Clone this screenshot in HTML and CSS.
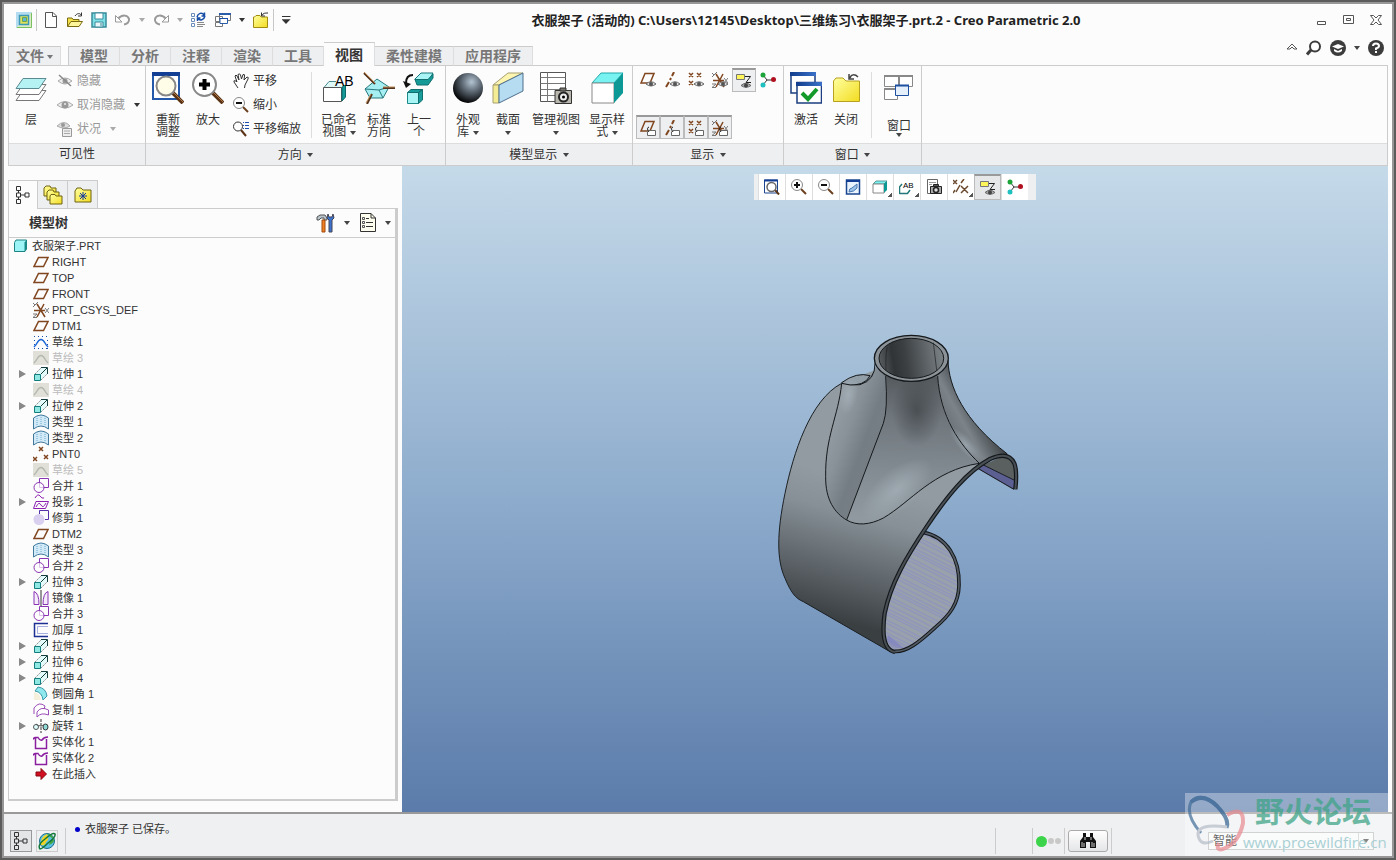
FILE: index.html
```html
<!DOCTYPE html>
<html lang="zh-CN">
  <head>
    <meta charset="utf-8" />
    <title>衣服架子 (活动的) - Creo Parametric 2.0</title>
    <meta name="viewport" content="width=device-width, initial-scale=1" />
    <link rel="stylesheet" href="styles.css" />
  </head>
  <body>
    <svg class="sprite" aria-hidden="true">
      <defs>
        <radialGradient id="ball" cx=".62" cy=".3" r=".7">
          <stop offset="0" stop-color="#b4c4d2" />
          <stop offset=".45" stop-color="#5f6b76" />
          <stop offset="1" stop-color="#050607" />
        </radialGradient>
        <linearGradient id="yellow" x1="0" y1="0" x2="1" y2="1">
          <stop offset="0" stop-color="#ffffa0" />
          <stop offset="1" stop-color="#f2dc20" />
        </linearGradient>
        <linearGradient id="blueTop" x1="0" y1="0" x2="1" y2="0">
          <stop offset="0" stop-color="#123c8c" />
          <stop offset="1" stop-color="#3a72c8" />
        </linearGradient>
      </defs>

      <!-- quick access -->
      <symbol id="app" viewBox="0 0 16 16"><path d="M0 0H16V16H0z" fill="#d8ecc8" /><path d="M0 0H16L0 16z" fill="#b4dcf0" /><path d="M3.500 3.500H12.500V12.500H3.500z" fill="#dce25c" stroke="#3c98b8" stroke-width="1.500" /><path d="M6.500 5.500H10.500V9.500H6.500z" fill="#5fb4d8" stroke="#6aa84a" /><path d="M15.500 1V15.500H1" fill="none" stroke="#7ac060" /></symbol>
      <symbol id="new" viewBox="0 0 16 16"><path d="M2.500.5H10L13.500 4V15.500H2.500z" fill="#fff" stroke="#555" /><path d="M9.500.5V4.500H13.500" fill="none" stroke="#555" /></symbol>
      <symbol id="open" viewBox="0 0 16 16"><path d="M.5 14V6H5L6 7.500H12V14z" fill="#f3e14a" stroke="#7a6a10" /><path d="M.5 14.500L4 9.500H15.500L12 14.500z" fill="#fff59a" stroke="#7a6a10" /><path d="M8 4C10 1 13 1 14 3M14.500.5V4H11" fill="none" stroke="#333" /></symbol>
      <symbol id="save" viewBox="0 0 16 16"><path d="M1 1H15V15H1z" fill="#7fe0e6" stroke="#3a8a9a" stroke-width="1.500" /><path d="M4 1H12V7H4z" fill="#fff" stroke="#3a8a9a" /><path d="M4 10H12V15H4z" fill="#e8f6f8" stroke="#3a8a9a" /><path d="M10 11V14" stroke="#3a8a9a" /></symbol>
      <symbol id="undo" viewBox="0 0 16 16"><path d="M3 7C7 2 13 3 14 7C14.500 10 12 12 9 12.500" fill="none" stroke="#999" stroke-width="2" /><path d="M.5 3.500V10H7z" fill="#fff" stroke="#999" /></symbol>
      <symbol id="redo" viewBox="0 0 16 16"><path d="M13 7C9 2 3 3 2 7C1.500 10 4 12 7 12.500" fill="none" stroke="#999" stroke-width="2" /><path d="M15.500 3.500V10H9z" fill="#fff" stroke="#999" /></symbol>
      <symbol id="regen" viewBox="0 0 16 16"><path d="M.5 1.500H3.500V4.500H.5zM.5 6.500H3.500V9.500H.5zM.5 11.500H3.500V14.500H.5z" fill="#fff" stroke="#6a8cb8" /><path d="M6 10.500H13M6 12.500H14M6 14.500H12" stroke="#888" /><path d="M6 5C7 1 11 0 13 3M14 4C13 8 9 9 7 6.500M13.500.5V4H10.500M6.500 9V6H9.500" fill="none" stroke="#174ea6" stroke-width="1.500" /></symbol>
      <symbol id="windows" viewBox="0 0 16 16"><path d="M4.500 1.500H15.500V8.500H4.500zM.5 4.500H7.500V9.500H.5zM.5 10.500H7.500V14.500H.5z" fill="#fff" stroke="#777" /><path d="M4 2H16" stroke="#2a5ca8" stroke-width="2" /><path d="M5 6.500H12.500V11.500H5z" fill="#fff" stroke="#2a5ca8" /><path d="M4.500 6.500H13" stroke="#174ea6" /></symbol>
      <symbol id="closefile" viewBox="0 0 16 16"><path d="M.5 15.500V5H1.500L3 3.500H7L8 5H14.500V15.500z" fill="url(#yellow)" stroke="#a08c10" /><path d="M9 3.500C10 1 12 1 15 1M8.500.5V4H12" fill="none" stroke="#333" /></symbol>

      <!-- ribbon, large -->
      <symbol id="layers" viewBox="0 0 32 32"><path d="M8 18.500H31L24 28.500H1z" fill="#fff" stroke="#777" /><path d="M8 12.500H31L24 22.500H1z" fill="#fff" stroke="#777" /><path d="M8 6.500H31L24 16.500H1z" fill="#b4f2f4" stroke="#5b8a90" /></symbol>
      <symbol id="refit" viewBox="0 0 32 32"><path d="M1 1H27V27H1z" fill="#fff" stroke="#2458a8" stroke-width="2" /><path d="M0 0H28V4H0z" fill="#123f94" /><path d="M20 20L31 31" stroke="#5b3416" stroke-width="4" /><path d="M21 20L31 30" stroke="#b07a48" stroke-width="1" /><circle cx="14" cy="14" r="9.500" fill="#fffde8" stroke="#888" stroke-width="2" /></symbol>
      <symbol id="zoomin" viewBox="0 0 32 32"><path d="M20 20L31 31" stroke="#5b3416" stroke-width="4" /><path d="M21 20L31 30" stroke="#b07a48" /><circle cx="12.500" cy="12.500" r="11.500" fill="#fff" stroke="#888" stroke-width="2" /><path d="M12.500 7V18M7 12.500H18" stroke="#000" stroke-width="4" /></symbol>
      <symbol id="named" viewBox="0 0 32 32"><path d="M1 15.500L6 9.500H23L19 15.500z" fill="#dff8f8" stroke="#4a8a90" /><path d="M.5 15.500H18.500V29.500H.5z" fill="#fff" stroke="#555" /><path d="M19 16L22.500 11V25L19 29z" fill="#159a98" stroke="#0b6b6a" /><path d="M13 0H32V13H13z" fill="#fcfcfc" /></symbol>
      <symbol id="stdview" viewBox="0 0 32 32"><path d="M2 17L14 7L26 15L20 26H7z" fill="#a5eef2" stroke="#27777c" /><path d="M2 17L16 18L26 15M16 18L20 26" fill="none" stroke="#27777c" /><path d="M1 1L12 12M20 16H32M9 22L4 32" stroke="#54341c" stroke-width="2" /><path d="M1 0L12 11M20 15H32M8 22L3 31" stroke="#c08c58" /></symbol>
      <symbol id="previous" viewBox="0 0 32 32"><path d="M4.500 20.500H15.500V31.500H4.500z" fill="#a9f4f4" stroke="#1d8a8a" /><path d="M4.500 20.500L8 17.500H19.500L15.500 20.500zM15.500 20.500L19.500 17.500V28L15.500 31.500z" fill="#189d9b" stroke="#126f70" /><path d="M12 7L18 1H30L26 8H12z" fill="#a9f4f4" stroke="#18777a" /><path d="M12 7.500H25L30 2V6L25 13H14z" fill="#159a98" stroke="#126f70" /><path d="M10 3C4 3 3 7 3 11" fill="none" stroke="#111" stroke-width="2" /><path d="M0 9L8 12L3 16z" fill="#111" /></symbol>
      <symbol id="sphere" viewBox="0 0 32 32"><circle cx="16" cy="16" r="15" fill="url(#ball)" /></symbol>
      <symbol id="section" viewBox="0 0 32 32"><path d="M1 13L16 1H31L7 13z" fill="#fbf5b0" stroke="#a8a070" /><path d="M1 13H7V31H1z" fill="#f4ec94" stroke="#a8a070" /><path d="M7 13L31 1V19L7 31z" fill="#b5dcf1" stroke="#4c6e8c" /></symbol>
      <symbol id="viewmgr" viewBox="0 0 32 32"><path d="M.5.5H25.500V29.500H.5z" fill="#fff" stroke="#555" /><path d="M.5 5.500H25.500M.5 11.500H25.500M.5 17.500H25.500M.5 23.500H25.500M7.500.5V29.500" stroke="#777" /><path d="M15 18.500H31.500V31.500H15z" fill="#b9b6ae" stroke="#333" /><path d="M20 16H26V19H20z" fill="#77746c" stroke="#333" /><circle cx="23.500" cy="25" r="4.500" fill="#eee" stroke="#222" stroke-width="2" /><circle cx="23.500" cy="25" r="1.500" /></symbol>
      <symbol id="style" viewBox="0 0 32 32"><path d="M1 11L10 1H32L23 11z" fill="#79f2f2" stroke="#2aa" /><path d="M1 11H23V31H1z" fill="#fff" stroke="#888" /><path d="M23 11L32 1V21L23 31z" fill="#0c9996" /></symbol>
      <symbol id="activate" viewBox="0 0 32 32"><path d="M1 1H25V21H1z" fill="#fff" stroke="#1d3e80" stroke-width="1.500" /><path d="M0 0H26V4H0z" fill="url(#blueTop)" /><path d="M7 10.500H31.500V31H7z" fill="#fff" stroke="#1d3e80" stroke-width="1.500" /><path d="M6 10H32V14H6z" fill="url(#blueTop)" /><path d="M12 21L18 27L27 17" fill="none" stroke="#149a2a" stroke-width="4" /></symbol>
      <symbol id="closewin" viewBox="0 0 32 32"><path d="M3.500 29.500V9L6 6H13L16 9H29.500V29.500z" fill="url(#yellow)" stroke="#b8a020" /><path d="M20 6C21 2 25 2 28 5M19 2V7H24" fill="none" stroke="#444" stroke-width="1.500" /></symbol>
      <symbol id="winlist" viewBox="0 0 32 32"><path d="M1.500 3.500H15.500V14.500H1.500zM16.500 3.500H29.500V14.500H16.500zM1.500 16.500H14.500V27.500H1.500z" fill="#fff" stroke="#888" /><path d="M1 4H30M1 17H14" stroke="#888" stroke-width="2" /><path d="M12.500 13.500H25.500V23.500H12.500z" fill="#e6f0fb" stroke="#1d4fa0" /><path d="M12 13.500H26" stroke="#1d4fa0" stroke-width="2" /></symbol>

      <!-- ribbon, small -->
      <symbol id="hide" viewBox="0 0 16 16"><path d="M1 8Q8 2 15 8Q8 14 1 8z" fill="#eee" stroke="#aaa" /><circle cx="8" cy="8" r="2.500" fill="#999" /><path d="M2 2L14 13" stroke="#888" stroke-width="1.500" /></symbol>
      <symbol id="eye" viewBox="0 0 16 16"><path d="M0 8Q8 1 16 8Q8 14 0 8z" fill="#eee" stroke="#aaa" /><circle cx="8" cy="8" r="3.500" fill="#999" /><circle cx="8" cy="7" r="1" fill="#eee" /></symbol>
      <symbol id="status" viewBox="0 0 16 16"><path d="M0 5Q7 -2 13 5Q7 9 0 5z" fill="#ddd" stroke="#aaa" /><circle cx="6" cy="4" r="2" fill="#999" /><path d="M5.500 7.500H14.500V15.500H5.500z" fill="#eee" stroke="#999" /><path d="M7 10H13M7 12.500H13" stroke="#aaa" /></symbol>
      <symbol id="hand" viewBox="0 0 16 16"><path d="M5 15L1 9Q0 7 3 8L4 9L2 3Q3 1 4 3L6 7L5 1.500Q7 0 7.500 2L8.500 6L10 1.500Q12 1 11.500 3L11 7L14 4Q16 4 15 6L12 12L11.500 15" fill="#fff" stroke="#333" /></symbol>
      <symbol id="zoomout" viewBox="0 0 16 16"><path d="M10 10L15 15" stroke="#6b4020" stroke-width="2" /><circle cx="6" cy="6" r="5.500" fill="#fff" stroke="#888" /><path d="M3 6H9" stroke="#111" stroke-width="2" /></symbol>
      <symbol id="zoomplus" viewBox="0 0 16 16"><path d="M10 10L15 15" stroke="#6b4020" stroke-width="2" /><circle cx="6" cy="6" r="5.500" fill="#fff" stroke="#888" /><path d="M3 6H9M6 3V9" stroke="#111" stroke-width="2" /></symbol>
      <symbol id="panzoom" viewBox="0 0 16 16"><path d="M8 9L13 15" stroke="#5b3416" stroke-width="2" /><circle cx="5" cy="5.500" r="4.500" fill="#fff" stroke="#333" /><path d="M10 1.500H11M12 1.500H16M10 4.500H11M12 4.500H16M10 7.500H11M12 7.500H16" stroke="#1b4fae" /></symbol>
      <symbol id="minieye" viewBox="0 0 16 16"><path d="M6 12Q11 7.500 16 12Q11 16 6 12z" fill="#ddd" stroke="#666" /><circle cx="11" cy="12" r="2" fill="#555" /></symbol>
      <symbol id="minitag" viewBox="0 0 16 16"><path d="M9 10.500H15.500V15.500H7.500V12z" fill="#fff" stroke="#666" /><path d="M9 12Q6 8 9 7" fill="none" stroke="#222" /></symbol>
      <symbol id="plane" viewBox="0 0 16 16"><path d="M5.500 3.500H15L10.500 12.500H1z" fill="none" stroke="#804620" stroke-width="1.500" /></symbol>
      <symbol id="splane" viewBox="0 0 16 16"><path d="M5 1.500H14L10 11H1z" fill="none" stroke="#804620" stroke-width="1.500" /></symbol>
      <symbol id="axis" viewBox="0 0 16 16"><path d="M10 0L8 4M7 6L6 8M5 10L2 15" stroke="#804620" stroke-width="2" /></symbol>
      <symbol id="points" viewBox="0 0 16 16"><path d="M1 1L5 5M5 1L1 5M9 1L13 5M13 1L9 5M1 9L5 13M5 9L1 13" stroke="#804620" stroke-width="1.500" /></symbol>
      <symbol id="csys" viewBox="0 0 16 16"><path d="M1 8.500H12M4 15L11 2M4 2L12 15" stroke="#804620" stroke-width="1.500" /><path d="M0 1L2 3M5 0L0 5M12 6L16 11M16 6L12 11M0 12H4L0 15.500H4" fill="none" stroke="#777" /></symbol>
      <symbol id="anno" viewBox="0 0 16 16"><path d="M.5 1.500H8.500V6.500H.5z" fill="#fff45a" stroke="#777" /><path d="M9 3.500H14.500L10 9.500H15" fill="none" stroke="#222" /><path d="M5 12.500Q10 8 15 12.500Q10 16 5 12.500z" fill="#aaa" stroke="#666" /><circle cx="10" cy="12.500" r="2" fill="#444" /></symbol>
      <symbol id="spin" viewBox="0 0 16 16"><path d="M3 3L7 8L3 13M7 8H13" fill="none" stroke="#333" /><circle cx="3" cy="3" r="2.500" fill="#1ca43a" /><circle cx="3" cy="13" r="2.500" fill="#1fc0c0" /><circle cx="13.500" cy="7.500" r="2.500" fill="#b01020" /></symbol>

      <!-- graphics toolbar -->
      <symbol id="refit16" viewBox="0 0 16 16"><path d="M.5 1H13.500V14H.5z" fill="#fff" stroke="#1b4690" /><path d="M0 1.500H14" stroke="#123f94" stroke-width="2" /><path d="M11 11L15 15.500" stroke="#5b3416" stroke-width="2" /><circle cx="7.500" cy="8" r="4.500" fill="#fff" stroke="#666" stroke-width="1.500" /></symbol>
      <symbol id="repaint" viewBox="0 0 16 16"><path d="M1.500 1H14.500V15H1.500z" fill="#eaf4ff" stroke="#1b4690" stroke-width="1.500" /><path d="M1 2H15" stroke="#123f94" stroke-width="2" /><path d="M4 13Q4 9 7 9L12 5V9Q9 13 4 13z" fill="#9cc4ea" stroke="#4a77b0" /></symbol>
      <symbol id="cube16" viewBox="0 0 16 16"><path d="M1 5L4 2H15L12 5z" fill="#79f2f2" stroke="#5a9a9a" /><path d="M1 5H12V14H1z" fill="#fff" stroke="#888" /><path d="M12 5L15 2V11L12 14z" fill="#0c9996" /></symbol>
      <symbol id="named16" viewBox="0 0 16 16"><path d="M.5 15V8L3 5M.5 14.500H8.500L11 11" fill="none" stroke="#22777a" stroke-width="1.500" /></symbol>
      <symbol id="viewmgr16" viewBox="0 0 16 16"><path d="M1.500.5H11.500V14.500H1.500z" fill="#fff" stroke="#666" /><path d="M3 3.500H10M3 5.500H6" stroke="#999" /><path d="M4.500 7.500H15.500V14.500H4.500z" fill="#aaa" stroke="#222" /><path d="M7.500 5.500H12.500V7.500H7.500z" fill="#555" stroke="#222" /><circle cx="10" cy="11" r="2.500" fill="#ddd" stroke="#222" stroke-width="1.500" /></symbol>
      <symbol id="datum16" viewBox="0 0 16 16"><path d="M0 1L4 5M4 1L0 5M11 0L8 4M7 6L3 13M8 7L15 14M15 7L8 14M0 14L2 11" stroke="#6b4a30" stroke-width="1.500" /></symbol>

      <!-- panel and tree -->
      <symbol id="treetab" viewBox="0 0 16 20"><path d="M1.500 1.500H5.500V5.500H1.500zM1.500 8H5.500V12H1.500zM1.500 14.500H5.500V18.500H1.500zM10 8H14V12H10zM3.500 5.500V8M3.500 12V14.500M5.500 10H10" fill="none" stroke="#333" /></symbol>
      <symbol id="folders" viewBox="0 0 20 20"><path d="M1 11V3L3 1H7L8 3H13V11z" fill="url(#yellow)" stroke="#6e6210" /><path d="M4 15V7L6 5H10L11 7H16V15z" fill="url(#yellow)" stroke="#6e6210" /><path d="M7 19V11L8 9.500H12L13 11H19V19z" fill="url(#yellow)" stroke="#6e6210" /></symbol>
      <symbol id="favorite" viewBox="0 0 20 20"><path d="M2 17V6L4 3H8L10 5H18V17z" fill="url(#yellow)" stroke="#6e6210" /><path d="M10 7V15M6 11H14M7 8L13 14M13 8L7 14" stroke="#123a9c" /></symbol>
      <symbol id="tools" viewBox="0 0 20 20"><path d="M1 7V4L4 2H9L11 5V7H8V5H5L3 7z" fill="#b8c4cc" stroke="#555" /><path d="M6 7H9V19H6z" fill="#f08020" stroke="#a04a10" /><path d="M12 1L11 5L13 7V19H16V7L18 5L17 1L16 4H13z" fill="#3a72d0" stroke="#445" /></symbol>
      <symbol id="settings" viewBox="0 0 18 20"><path d="M1.500.5H12L16.500 5V18.500H1.500z" fill="#fffff0" stroke="#333" /><path d="M12 .5V5H16.500M7 5.500H10M7 9.500H14M7 13.500H14" fill="none" stroke="#333" /><path d="M3.500 4.500H5.500V6.500H3.500zM3.500 8.500H5.500V10.500H3.500zM3.500 12.500H5.500V14.500H3.500z" fill="none" stroke="#555" /></symbol>
      <symbol id="part" viewBox="0 0 16 16"><path d="M1.500 4.500L3 2H13.500V11L12 13.500H1.500z" fill="#9cf4f6" stroke="#1c8284" /><path d="M11.500 4.500L13.500 2V11L11.500 13.500z" fill="#178a8a" /></symbol>
      <symbol id="arrow" viewBox="0 0 8 10"><path d="M0 1L7 5L0 9z" fill="#888" /></symbol>
      <symbol id="sketch" viewBox="0 0 16 16"><path d="M1 2.500H15M1 14.500H15M1.500 6V15M14.500 6V15" stroke="#1b4fae" stroke-dasharray="1 3" /><path d="M1 13Q3 11 4 9Q8 2 12 9Q13 11 15 13" fill="none" stroke="#1a66d6" stroke-width="1.500" /></symbol>
      <symbol id="sketchoff" viewBox="0 0 16 16"><path d="M0 1H16V15H0z" fill="#e0e0d8" /><path d="M1 13Q3 11 4 9Q8 2 12 9Q13 11 15 13" fill="none" stroke="#b4b8b0" stroke-width="1.500" /></symbol>
      <symbol id="extrude" viewBox="0 0 16 16"><path d="M1.500 9L9 1.500H14.500V7L7.500 14.500z" fill="#e4fbfb" /><path d="M1.500 8.500H7.500V14.500H1.500z" fill="#8fe8e2" stroke="#137c7c" /><path d="M2 8L8 2M8 14L14 8" stroke="#888" stroke-dasharray="2 1" /><path d="M8 1.500H14.500V8M8 8L14 2" fill="none" stroke="#163c3c" /></symbol>
      <symbol id="boundary" viewBox="0 0 16 16"><path d="M.5 4Q8 -2 15.500 4V15Q8 9 .5 15z" fill="#d2eaf8" stroke="#42789c" /><path d="M4 2V12M8 1V11M12 2V12" stroke="#6fa8cc" stroke-dasharray="1 1" /></symbol>
      <symbol id="pnt" viewBox="0 0 16 16"><path d="M6 1L10 5M10 1L6 5M0 11L4 15M4 11L0 15M11 9L15 13M15 9L11 13" stroke="#804620" stroke-width="1.500" /></symbol>
      <symbol id="merge" viewBox="0 0 16 16"><path d="M6.500.5H15.500V9.500H6.500z" fill="#fff" stroke="#8a35b4" /><circle cx="6" cy="9.500" r="5" fill="#fff" fill-opacity=".7" stroke="#8a35b4" /></symbol>
      <symbol id="project" viewBox="0 0 16 16"><path d="M2 4Q5 -1 7 2T11 4M3 7.500H15.500L12.500 14.500H.5zM3 13Q6 7 8 11T13 9" fill="none" stroke="#8a1fb0" /></symbol>
      <symbol id="trim" viewBox="0 0 16 16"><circle cx="6" cy="9.500" r="5.500" fill="#d8d0ee" /><path d="M6.500 4V.5H15.500V9.500H12" fill="none" stroke="#5530a8" /></symbol>
      <symbol id="mirror" viewBox="0 0 16 16"><path d="M8 0V16" stroke="#333" /><path d="M1 1.500Q6 3 6 14.500H1zM15 1.500Q10 3 10 14.500H15z" fill="#f4ecfa" stroke="#8a35b4" /></symbol>
      <symbol id="thicken" viewBox="0 0 16 16"><path d="M15 1.500H1.500V14.500H15" fill="none" stroke="#1c2f94" stroke-width="1.500" /><path d="M15 4.500H4.500V11.500H15" fill="none" stroke="#a9b0e0" /></symbol>
      <symbol id="round" viewBox="0 0 16 16"><path d="M2 5Q9 6 10 14L14 10Q13 2 5 1z" fill="#8fe8ee" stroke="#3c98a8" /><path d="M1 6Q7 7 8 14H1z" fill="#f4f0dc" /></symbol>
      <symbol id="copy" viewBox="0 0 16 16"><path d="M1 12V6Q6 -1 12 4L11 7M4 15V10Q8 4 15.500 8V13Q8 10 4 15z" fill="#fff" stroke="#9a4cb8" /></symbol>
      <symbol id="revolve" viewBox="0 0 16 16"><path d="M8 1V15" stroke="#333" stroke-dasharray="3 1" /><circle cx="3" cy="9" r="2.500" fill="#dff" stroke="#555" /><ellipse cx="12.500" cy="9" rx="2.500" ry="3" fill="#8fd8d8" stroke="#333" /><path d="M3 6Q8 10 12 6" fill="none" stroke="#555" /></symbol>
      <symbol id="solidify" viewBox="0 0 16 16"><path d="M0 5.500Q1 3 3 3.500H5Q7 7 9 6Q11 3 15 3M2.500 4V14.500H13.500V5" fill="none" stroke="#8a1fa0" stroke-width="1.500" /></symbol>
      <symbol id="insert" viewBox="0 0 16 16"><path d="M3 6H8V2.500L13.500 8L8 13.500V10H3z" fill="#d01020" stroke="#8a0810" /></symbol>

      <!-- status bar -->
      <symbol id="binoculars" viewBox="0 0 16 16"><path d="M3 0H6V4H10V0H13V4L16 8V15H10V9H6V15H0V8L3 4z" fill="#111" /><path d="M2 9V14M4 10V14M12 9V14M14 10V14M5 4V7M11 4V7" stroke="#ccc" /></symbol>
      <symbol id="globe" viewBox="0 0 20 20"><circle cx="10" cy="10" r="7.500" fill="#5cc0e4" stroke="#1b6f8c" /><path d="M4 14Q3 6 10 3Q13 8 9 11Q8 15 4 14z" fill="#f2d423" /><path d="M10 3Q16 3 16 8Q13 9 12 14Q17 12 17 9" fill="#44a844" /><path d="M3 18Q0 14 8 8Q16 1 18 3Q19 6 11 12Q5 18 3 18z" fill="none" stroke="#14783c" stroke-width="1.500" /></symbol>
    </svg>

    <div class="window">
      <header class="titlebar">
        <div class="quick">
          <svg class="icon app-logo"><use href="#app" /></svg>
          <span class="divider"></span>
          <button class="tool" aria-label="新建"><svg class="icon"><use href="#new" /></svg></button>
          <button class="tool" aria-label="打开"><svg class="icon"><use href="#open" /></svg></button>
          <button class="tool" aria-label="保存"><svg class="icon"><use href="#save" /></svg></button>
          <button class="tool" aria-label="撤消"><svg class="icon"><use href="#undo" /></svg></button>
          <button class="drop off" aria-label="撤消列表"></button>
          <button class="tool" aria-label="重做"><svg class="icon"><use href="#redo" /></svg></button>
          <button class="drop off" aria-label="重做列表"></button>
          <button class="tool" aria-label="重新生成"><svg class="icon"><use href="#regen" /></svg></button>
          <button class="tool" aria-label="窗口"><svg class="icon"><use href="#windows" /></svg></button>
          <button class="drop" aria-label="窗口列表"></button>
          <button class="tool" aria-label="关闭"><svg class="icon"><use href="#closefile" /></svg></button>
          <span class="divider"></span>
          <button class="drop customize" aria-label="自定义"></button>
        </div>
        <h1 class="title">衣服架子 (活动的) C:\Users\12145\Desktop\三维练习\衣服架子.prt.2 - Creo Parametric 2.0</h1>
        <div class="controls">
          <button aria-label="最小化"><svg width="12" height="12" viewBox="0 0 12 12"><path d="M1.500 7.500H9.500V10.500H1.500z" fill="#fff" stroke="#555" /></svg></button>
          <button aria-label="最大化"><svg width="12" height="12" viewBox="0 0 12 12"><path d="M.5 1.500H10.500V9.500H.5zM3.500 4.500H7.500V6.500H3.500z" fill="#fff" stroke="#555" /></svg></button>
          <button aria-label="关闭窗口"><svg width="12" height="12" viewBox="0 0 12 12"><path d="M.5 1.500H3.500L6 4L8.500 1.500H11.500L8 6L11.500 10.500H8.500L6 8L3.500 10.500H.5L4 6z" fill="#fff" stroke="#555" /></svg></button>
        </div>
      </header>

      <nav class="tabs">
        <button class="tab file">文件<i class="caret"></i></button>
        <div class="tab-group">
          <button class="tab">模型</button>
          <button class="tab">分析</button>
          <button class="tab">注释</button>
          <button class="tab">渲染</button>
          <button class="tab">工具</button>
          <button class="tab active">视图</button>
          <button class="tab">柔性建模</button>
          <button class="tab">应用程序</button>
        </div>
        <div class="help">
          <button aria-label="最小化功能区"><svg width="12" height="12" viewBox="0 0 12 12"><path d="M1 7L6 2L11 7H8L6 5L4 7z" fill="#fff" stroke="#555" /></svg></button>
          <button aria-label="搜索"><svg width="16" height="16" viewBox="0 0 16 16"><circle cx="9" cy="6.500" r="5" fill="#fff" stroke="#3c3c3c" stroke-width="2" /><path d="M5 10L1 14.500" stroke="#3c3c3c" stroke-width="3" /></svg></button>
          <button aria-label="学习"><svg width="16" height="16" viewBox="0 0 16 16"><circle cx="8" cy="8" r="8" fill="#3c3c3c" /><path d="M2 6.500L8 4L14 6.500L8 9zM4 9V11Q8 14 12 11V9L8 11z" fill="#fff" /></svg></button>
          <i class="caret"></i>
          <button aria-label="帮助"><svg width="16" height="16" viewBox="0 0 16 16"><circle cx="8" cy="8" r="8" fill="#3c3c3c" /><path d="M5 6Q5 3.500 8 3.500T11 6Q11 7.500 8 8.500V10" fill="none" stroke="#fff" stroke-width="2" /><path d="M7 11H9V13H7z" fill="#fff" /></svg></button>
        </div>
      </nav>

      <section class="ribbon">
        <div class="group visibility">
          <div class="group-body">
            <button class="big"><svg class="icon-lg"><use href="#layers" /></svg><span>层</span></button>
            <div class="rows off">
              <button><svg class="icon"><use href="#hide" /></svg>隐藏</button>
              <button><svg class="icon"><use href="#eye" /></svg>取消隐藏<i class="caret dark"></i></button>
              <button><svg class="icon"><use href="#status" /></svg>状况<i class="caret"></i></button>
            </div>
          </div>
          <div class="group-name">可见性</div>
        </div>
        <div class="group orientation">
          <div class="group-body">
            <button class="big"><svg class="icon-lg"><use href="#refit" /></svg><span>重新<br />调整</span></button>
            <button class="big"><svg class="icon-lg"><use href="#zoomin" /></svg><span>放大</span></button>
            <div class="rows">
              <button><svg class="icon"><use href="#hand" /></svg>平移</button>
              <button><svg class="icon"><use href="#zoomout" /></svg>缩小</button>
              <button><svg class="icon"><use href="#panzoom" /></svg>平移缩放</button>
            </div>
            <span class="split"></span>
            <button class="big"><svg class="icon-lg"><use href="#named" /><text x="12" y="14" class="ico-text">AB</text></svg><span>已命名<br />视图 <i class="caret"></i></span></button>
            <button class="big"><svg class="icon-lg"><use href="#stdview" /></svg><span>标准<br />方向</span></button>
            <button class="big"><svg class="icon-lg"><use href="#previous" /></svg><span>上一<br />个</span></button>
          </div>
          <button class="group-name">方向 <i class="caret"></i></button>
        </div>
        <div class="group display">
          <div class="group-body">
            <button class="big"><svg class="icon-lg"><use href="#sphere" /></svg><span>外观<br />库 <i class="caret"></i></span></button>
            <button class="big"><svg class="icon-lg"><use href="#section" /></svg><span>截面<br /><i class="caret"></i></span></button>
            <button class="big wide"><svg class="icon-lg"><use href="#viewmgr" /></svg><span>管理视图<br /><i class="caret"></i></span></button>
            <button class="big mid"><svg class="icon-lg"><use href="#style" /></svg><span>显示样<br />式 <i class="caret"></i></span></button>
          </div>
          <button class="group-name">模型显示 <i class="caret"></i></button>
        </div>
        <div class="group show">
          <div class="group-body toggles">
            <div class="toggle-row">
              <button class="toggle" aria-label="平面显示"><svg class="icon"><use href="#splane" /><use href="#minieye" /></svg></button>
              <button class="toggle" aria-label="轴显示"><svg class="icon"><use href="#axis" /><use href="#minieye" /></svg></button>
              <button class="toggle" aria-label="点显示"><svg class="icon"><use href="#points" /><use href="#minieye" /></svg></button>
              <button class="toggle" aria-label="坐标系显示"><svg class="icon"><use href="#csys" /><use href="#minieye" /></svg></button>
              <button class="toggle on" aria-label="注释显示"><svg class="icon"><use href="#anno" /></svg></button>
              <button class="toggle" aria-label="旋转中心"><svg class="icon"><use href="#spin" /></svg></button>
            </div>
            <div class="toggle-row">
              <button class="toggle on" aria-label="平面标记显示"><svg class="icon"><use href="#splane" /><use href="#minitag" /></svg></button>
              <button class="toggle on" aria-label="轴标记显示"><svg class="icon"><use href="#axis" /><use href="#minitag" /></svg></button>
              <button class="toggle on" aria-label="点标记显示"><svg class="icon"><use href="#points" /><use href="#minitag" /></svg></button>
              <button class="toggle on" aria-label="坐标系标记显示"><svg class="icon"><use href="#csys" /><use href="#minitag" /></svg></button>
            </div>
          </div>
          <button class="group-name">显示 <i class="caret"></i></button>
        </div>
        <div class="group windows">
          <div class="group-body">
            <button class="big"><svg class="icon-lg"><use href="#activate" /></svg><span>激活</span></button>
            <button class="big"><svg class="icon-lg"><use href="#closewin" /></svg><span>关闭</span></button>
            <span class="split"></span>
            <button class="big list"><svg class="icon-lg"><use href="#winlist" /></svg><span>窗口<br /><i class="caret"></i></span></button>
          </div>
          <button class="group-name">窗口 <i class="caret"></i></button>
        </div>
        <div class="group rest">
          <div class="group-body"></div>
          <div class="group-name"></div>
        </div>
      </section>

      <main class="workspace">
        <aside class="navigator">
          <div class="nav-tabs">
            <button class="nav-tab active" aria-label="模型树"><svg width="16" height="20"><use href="#treetab" /></svg></button>
            <button class="nav-tab" aria-label="文件夹浏览器"><svg width="20" height="20"><use href="#folders" /></svg></button>
            <button class="nav-tab" aria-label="收藏夹"><svg width="20" height="20"><use href="#favorite" /></svg></button>
          </div>
          <div class="nav-panel">
            <div class="nav-head">
              <h2>模型树</h2>
              <button aria-label="设置"><svg width="20" height="20"><use href="#tools" /></svg><i class="caret"></i></button>
              <button aria-label="显示"><svg width="18" height="20"><use href="#settings" /></svg><i class="caret"></i></button>
            </div>
            <ul class="tree">
              <li class="root"><svg class="icon"><use href="#part" /></svg>衣服架子.PRT</li>
              <li><svg class="icon"><use href="#plane" /></svg>RIGHT</li>
              <li><svg class="icon"><use href="#plane" /></svg>TOP</li>
              <li><svg class="icon"><use href="#plane" /></svg>FRONT</li>
              <li><svg class="icon"><use href="#csys" /></svg>PRT_CSYS_DEF</li>
              <li><svg class="icon"><use href="#plane" /></svg>DTM1</li>
              <li><svg class="icon"><use href="#sketch" /></svg>草绘 1</li>
              <li class="hidden-item"><svg class="icon"><use href="#sketchoff" /></svg>草绘 3</li>
              <li class="parent"><svg class="arrow"><use href="#arrow" /></svg><svg class="icon"><use href="#extrude" /></svg>拉伸 1</li>
              <li class="hidden-item"><svg class="icon"><use href="#sketchoff" /></svg>草绘 4</li>
              <li class="parent"><svg class="arrow"><use href="#arrow" /></svg><svg class="icon"><use href="#extrude" /></svg>拉伸 2</li>
              <li><svg class="icon"><use href="#boundary" /></svg>类型 1</li>
              <li><svg class="icon"><use href="#boundary" /></svg>类型 2</li>
              <li><svg class="icon"><use href="#pnt" /></svg>PNT0</li>
              <li class="hidden-item"><svg class="icon"><use href="#sketchoff" /></svg>草绘 5</li>
              <li><svg class="icon"><use href="#merge" /></svg>合并 1</li>
              <li class="parent"><svg class="arrow"><use href="#arrow" /></svg><svg class="icon"><use href="#project" /></svg>投影 1</li>
              <li><svg class="icon"><use href="#trim" /></svg>修剪 1</li>
              <li><svg class="icon"><use href="#plane" /></svg>DTM2</li>
              <li><svg class="icon"><use href="#boundary" /></svg>类型 3</li>
              <li><svg class="icon"><use href="#merge" /></svg>合并 2</li>
              <li class="parent"><svg class="arrow"><use href="#arrow" /></svg><svg class="icon"><use href="#extrude" /></svg>拉伸 3</li>
              <li><svg class="icon"><use href="#mirror" /></svg>镜像 1</li>
              <li><svg class="icon"><use href="#merge" /></svg>合并 3</li>
              <li><svg class="icon"><use href="#thicken" /></svg>加厚 1</li>
              <li class="parent"><svg class="arrow"><use href="#arrow" /></svg><svg class="icon"><use href="#extrude" /></svg>拉伸 5</li>
              <li class="parent"><svg class="arrow"><use href="#arrow" /></svg><svg class="icon"><use href="#extrude" /></svg>拉伸 6</li>
              <li class="parent"><svg class="arrow"><use href="#arrow" /></svg><svg class="icon"><use href="#extrude" /></svg>拉伸 4</li>
              <li><svg class="icon"><use href="#round" /></svg>倒圆角 1</li>
              <li><svg class="icon"><use href="#copy" /></svg>复制 1</li>
              <li class="parent"><svg class="arrow"><use href="#arrow" /></svg><svg class="icon"><use href="#revolve" /></svg>旋转 1</li>
              <li><svg class="icon"><use href="#solidify" /></svg>实体化 1</li>
              <li><svg class="icon"><use href="#solidify" /></svg>实体化 2</li>
              <li><svg class="icon"><use href="#insert" /></svg>在此插入</li>
            </ul>
          </div>
        </aside>

        <section class="canvas">
          <div class="view-tools">
            <button aria-label="重新调整"><svg class="icon"><use href="#refit16" /></svg></button>
            <button aria-label="放大"><svg class="icon"><use href="#zoomplus" /></svg></button>
            <button aria-label="缩小"><svg class="icon"><use href="#zoomout" /></svg></button>
            <button aria-label="重画"><svg class="icon"><use href="#repaint" /></svg></button>
            <button class="more" aria-label="显示样式"><svg class="icon"><use href="#cube16" /></svg></button>
            <button class="more" aria-label="已命名视图"><svg class="icon"><use href="#named16" /><text x="4" y="9" class="ico-text-sm">AB</text></svg></button>
            <button aria-label="视图管理器"><svg class="icon"><use href="#viewmgr16" /></svg></button>
            <button class="more" aria-label="基准显示"><svg class="icon"><use href="#datum16" /></svg></button>
            <button class="on" aria-label="注释显示"><svg class="icon"><use href="#anno" /></svg></button>
            <button aria-label="旋转中心"><svg class="icon"><use href="#spin" /></svg></button>
          </div>

          <svg class="model" viewBox="-15 0 840 1050" role="img" aria-label="衣服架子">
            <defs>
              <linearGradient id="body" gradientUnits="userSpaceOnUse" x1="300" y1="480" x2="190" y2="890">
                <stop offset="0" stop-color="#929ba1" />
                <stop offset=".25" stop-color="#869096" />
                <stop offset=".6" stop-color="#646b70" />
                <stop offset="1" stop-color="#3a3f42" />
              </linearGradient>
              <linearGradient id="neck" gradientUnits="userSpaceOnUse" x1="450" y1="160" x2="430" y2="600">
                <stop offset="0" stop-color="#52575b" />
                <stop offset=".3" stop-color="#6f767c" />
                <stop offset=".7" stop-color="#848d94" />
                <stop offset="1" stop-color="#8f999f" />
              </linearGradient>
              <linearGradient id="side" gradientUnits="userSpaceOnUse" x1="210" y1="300" x2="370" y2="360">
                <stop offset="0" stop-color="#949da4" />
                <stop offset=".35" stop-color="#899299" />
                <stop offset=".7" stop-color="#757d84" />
                <stop offset="1" stop-color="#777f85" />
              </linearGradient>
              <linearGradient id="hole" gradientUnits="userSpaceOnUse" x1="360" y1="120" x2="550" y2="90">
                <stop offset="0" stop-color="#55595c" />
                <stop offset=".2" stop-color="#303436" />
                <stop offset=".4" stop-color="#3c4043" />
                <stop offset="1" stop-color="#7d8488" />
              </linearGradient>
              <linearGradient id="flank" gradientUnits="userSpaceOnUse" x1="570" y1="310" x2="660" y2="260">
                <stop offset="0" stop-color="#6e757b" />
                <stop offset=".35" stop-color="#7c848a" />
                <stop offset="1" stop-color="#3e4346" />
              </linearGradient>
              <radialGradient id="glow">
                <stop offset="0" stop-color="#a9b4bc" stop-opacity=".7" />
                <stop offset="1" stop-color="#a9b4bc" stop-opacity="0" />
              </radialGradient>
              <radialGradient id="shade">
                <stop offset="0" stop-color="#3c4144" stop-opacity=".7" />
                <stop offset="1" stop-color="#3c4144" stop-opacity="0" />
              </radialGradient>
              <pattern id="ribs" width="40" height="66" patternUnits="userSpaceOnUse" patternTransform="rotate(27)">
                <path d="M0 0H40V66H0z" fill="#99a2aa" />
                <path d="M0 4H40M0 13H40M0 20H40M0 35H40M0 44H40M0 58H40" stroke="#8a8fc4" stroke-width="3" />
              </pattern>
            </defs>
            <!-- inner face of the sleeve -->
            <path d="M490 636C560 650 602 715 599 795C598 850 572 885 530 922C480 968 440 1000 405 998C372 996 364 950 370 900C382 820 430 720 490 636z" fill="url(#ribs)" />
            <path d="M380 960Q392 988 430 984L385 945z" fill="#7d7fc4" opacity=".6" />
            <path d="M490 637C560 650 599 715 597 795C596 850 570 885 526 922C476 968 440 996 405 994" fill="none" stroke="#15181b" stroke-width="11" />
            <path d="M490 637C560 650 599 715 597 795C596 850 570 885 526 922C476 968 440 996 405 994" fill="none" stroke="#545d66" stroke-width="5" />
            <!-- far tip -->
            <path d="M650 445L735 405Q772 415 770 500L758 508z" fill="#5a605f" />
            <path d="M652 444L664 432L766 482L762 508z" fill="#5b5f92" stroke="#1c1f28" stroke-width="3" />
            <!-- outer shell -->
            <path d="M245 190C150 240 100 400 75 520C50 640 50 720 75 775C92 815 105 835 130 845L385 992C362 970 364 920 375 870C400 770 450 690 500 610C560 520 610 470 660 432L742 402C610 300 566 200 564 120L345 150z" fill="url(#body)" />
            <path d="M245 190C150 240 100 400 75 520C50 640 50 720 75 775C92 815 105 835 130 845L385 992" fill="none" stroke="#1b2024" stroke-width="3" />
            <!-- shoulder hump -->
            <path d="M245 188Q290 155 330 167Q344 158 344 145L376 170L350 220Q290 210 245 188z" fill="#79828a" />
            <path d="M245 188Q290 155 330 167Q315 200 255 195z" fill="#929ea8" stroke="#15191c" stroke-width="3" />
            <!-- blended patches -->
            <path d="M245 190C235 290 195 350 197 470C196 540 225 580 260 600L370 310Q383 270 378 166L345 140Q346 180 300 194Q270 198 245 190z" fill="url(#side)" />
            <ellipse cx="265" cy="225" rx="28" ry="60" transform="rotate(10 265 225)" fill="url(#glow)" />
            <path d="M345 130Q346 180 300 194Q270 198 245 190C235 290 195 350 197 470C196 540 225 580 260 600" fill="none" stroke="#15191c" stroke-width="3" />
            <path d="M260 600C290 618 330 615 370 594C450 548 520 450 658 430C600 370 540 290 533 168Q450 200 378 168Q384 270 370 310z" fill="url(#neck)" />
            <ellipse cx="470" cy="270" rx="75" ry="110" fill="url(#shade)" />
            <ellipse cx="410" cy="510" rx="130" ry="60" transform="rotate(-40 410 510)" fill="url(#glow)" />
            <path d="M564 120C566 200 610 300 742 402Q700 402 658 430C595 365 540 280 533 165z" fill="url(#flank)" />
            <ellipse cx="618" cy="375" rx="70" ry="22" transform="rotate(48 618 375)" fill="url(#glow)" />
            <path d="M564 120C566 200 610 300 742 402M533 168C540 290 600 375 658 430C520 450 450 548 370 594C330 615 290 618 260 600L370 310Q384 270 377 168" fill="none" stroke="#15191c" stroke-width="3" />
            <!-- thick cut edge -->
            <path d="M405 996C370 990 366 940 374 880C392 790 440 710 500 620C560 530 620 455 690 417Q745 392 763 430Q772 455 766 508" fill="none" stroke="#14181b" stroke-width="13" />
            <path d="M405 996C370 990 366 940 374 880C392 790 440 710 500 620C560 530 620 455 690 417Q745 392 763 430Q772 455 766 508" fill="none" stroke="#474e54" stroke-width="6" />
            <!-- collar -->
            <ellipse cx="454" cy="115" rx="111" ry="69" fill="#8b9398" stroke="#15191c" stroke-width="4" />
            <ellipse cx="454" cy="115" rx="97" ry="60" fill="url(#hole)" stroke="#15191c" stroke-width="3" />
            <path d="M382 82Q376 100 378 150M520 68L530 150" fill="none" stroke="#1c2022" stroke-width="2" />
          </svg>
        </section>
      </main>

      <footer class="status">
        <button class="status-btn pressed" aria-label="切换导航器"><svg width="16" height="20"><use href="#treetab" /></svg></button>
        <button class="status-btn" aria-label="切换浏览器"><svg width="20" height="20"><use href="#globe" /></svg></button>
        <span class="bar"></span>
        <p class="message"><i class="bullet"></i>衣服架子 已保存。</p>
        <span class="bar"></span>
        <span class="bar lights-start"></span>
        <span class="lights"><i></i><i></i><i></i></span>
        <span class="bar"></span>
        <button class="find" aria-label="查找"><svg class="icon"><use href="#binoculars" /></svg></button>
        <span class="bar"></span>
        <label class="filter" aria-label="选择过滤器">
          <select>
            <option>智能</option>
          </select>
          <i class="caret"></i>
        </label>
      </footer>

      <div class="watermark">
        <svg class="watermark-logo" viewBox="0 0 60 60">
          <path d="M14 40Q-2 22 4 9Q12 -1 27 10Q43 24 40 35" fill="none" stroke="#3f6c98" stroke-width="3" />
          <path d="M4 9Q16 -1 30 13Q42 26 40 33" fill="none" stroke="#2f5f8f" stroke-width="4" />
          <path d="M40 34Q10 30 11 42Q13 54 26 48" fill="none" stroke="#b4bcc8" stroke-width="3" />
          <path d="M40 22Q57 12 56 30Q52 50 36 56Q28 58 32 50" fill="none" stroke="#e88a90" stroke-width="4" />
        </svg>
        <div class="watermark-text">
          <strong>野火论坛</strong>
          <span>www.proewildfire.cn</span>
        </div>
      </div>
    </div>
  </body>
</html>
```
FILE: styles.css
```css
* {
  box-sizing: border-box;
}
body {
  margin: 0;
  font: 12px/16px "Liberation Sans", "Noto Sans CJK SC", sans-serif;
  color: #333;
  background: #fcfcfc;
}
button {
  margin: 0;
  padding: 0;
  border: 0;
  background: none;
  font: inherit;
  color: inherit;
}
svg {
  display: block;
  flex: none;
}
.sprite {
  position: absolute;
  width: 0;
  height: 0;
}
.icon {
  width: 16px;
  height: 16px;
}
.icon-lg {
  width: 32px;
  height: 32px;
}
.ico-text {
  font: 14px "Liberation Sans", sans-serif;
}
.ico-text-sm {
  font: 8px "Liberation Sans", sans-serif;
}
.caret {
  display: inline-block;
  flex: none;
  width: 0;
  height: 0;
  border: 3px solid transparent;
  border-top: 4px solid #444;
  border-bottom: 0;
  vertical-align: middle;
}

.window {
  position: relative;
  display: flex;
  flex-direction: column;
  height: 100vh;
  border: 4px solid #979797;
  box-shadow: inset 0 0 0 1px #fff;
  outline: 2px solid #5c5c5c;
  outline-offset: -2px;
}

/* title bar */
.titlebar {
  display: flex;
  align-items: center;
  height: 32px;
  padding: 0 10px 0 12px;
}
.quick {
  display: flex;
  align-items: center;
}
.app-logo {
  margin-right: 4px;
}
.divider {
  width: 1px;
  height: 22px;
  margin-right: 2px;
  background: #c8c8c8;
}
.tool {
  display: grid;
  place-items: center;
  width: 24px;
  height: 24px;
}
.drop {
  display: grid;
  place-items: center;
  width: 14px;
  height: 24px;
}
.drop::after {
  content: "";
  border: 3px solid transparent;
  border-top: 4px solid #333;
  border-bottom: 0;
}
.drop.off::after {
  border-top-color: #aaa;
}
.drop.customize {
  width: 20px;
}
.drop.customize::after {
  width: 9px;
  height: 8px;
  border: 0;
  background: #333;
  clip-path: polygon(0 0, 100% 0, 100% 13%, 0 13%, 0 40%, 100% 40%, 50% 100%, 0 40%);
}
.title {
  flex: 1;
  margin: 0;
  font: bold 13px/20px "Noto Sans", "Noto Sans CJK SC", sans-serif;
  text-align: center;
  color: #222;
}
.controls {
  display: flex;
  gap: 15px;
}

/* ribbon tabs */
.tabs {
  display: flex;
  align-items: flex-end;
  height: 30px;
  padding: 0 4px;
  margin-bottom: -1px;
  z-index: 1;
}
.tab-group {
  display: flex;
  align-items: flex-end;
  margin-left: 7px;
}
.tab {
  height: 20px;
  padding: 0 11px;
  border: 1px solid #ccc;
  border-left: 0;
  border-right-color: #ddd;
  background: #eeeff1;
  font-size: 14px;
  font-weight: bold;
  line-height: 18px;
  color: #777;
}
.tab:first-child {
  border-left: 1px solid #ccc;
}
.tab.file {
  padding: 0 7px;
}
.tab.file .caret {
  margin-left: 3px;
  border-top-color: #777;
}
.tab.active {
  height: 24px;
  border-bottom: 0;
  background: #fcfcfc;
  color: #333;
}
.help {
  display: flex;
  align-items: center;
  align-self: flex-start;
  gap: 8px;
  height: 24px;
  margin-left: auto;
  padding-right: 4px;
}

/* ribbon */
.ribbon {
  display: flex;
  height: 101px;
  margin: 0 4px;
  border: 1px solid #ccc;
}
.group {
  display: flex;
  flex-direction: column;
  border-right: 1px solid #ccc;
}
.group-body {
  display: flex;
  flex: 1;
  padding: 6px 2px 0;
}
.group-name {
  height: 22px;
  border-top: 1px solid #ddd;
  background: #eeeff1;
  line-height: 20px;
  text-align: center;
}
.group-name .caret {
  margin-left: 2px;
}
.visibility {
  width: 137px;
}
.orientation {
  width: 300px;
}
.display {
  width: 187px;
}
.show {
  width: 151px;
}
.windows {
  width: 138px;
}
.rest {
  flex: 1;
  border-right: 0;
}
.big {
  display: flex;
  flex-direction: column;
  align-items: center;
  gap: 10px;
  width: 40px;
  line-height: 12px;
  white-space: nowrap;
}
.big.wide {
  width: 56px;
}
.big.mid {
  width: 46px;
}
.big.list {
  gap: 18px;
}
.big.list span {
  line-height: 8px;
}
.rows {
  display: flex;
  flex-direction: column;
  gap: 8px;
  padding: 1px 5px;
}
.visibility .rows {
  padding: 1px 0;
  margin-left: 6px;
}
.rows button {
  display: flex;
  align-items: center;
  gap: 4px;
  height: 16px;
}
.rows.off {
  color: #999;
}
.rows .caret {
  margin-left: 5px;
  border-top-color: #aaa;
}
.rows .caret.dark {
  border-top-color: #333;
}
.split {
  width: 1px;
  height: 66px;
  margin: 0 7px 0 5px;
  background: #ddd;
}
.group-body.toggles {
  flex-direction: column;
  justify-content: space-between;
  padding: 2px 3px 4px;
}
.toggle-row {
  display: flex;
}
.toggle {
  display: grid;
  place-items: center;
  width: 24px;
  height: 24px;
}
.toggle.on {
  border: 1px solid #bbb;
  border-top: 2px solid #999;
  background: #eeeff1;
}

/* navigator */
.workspace {
  display: flex;
  flex: 1;
  min-height: 0;
  margin-right: 4px;
}
.navigator {
  display: flex;
  flex-direction: column;
  width: 398px;
  padding: 14px 4px 11px;
}
.nav-tabs {
  display: flex;
  margin-bottom: -1px;
  z-index: 1;
}
.nav-tab {
  display: grid;
  place-items: center;
  width: 30px;
  height: 29px;
  border: 1px solid #ccc;
  border-left: 0;
  background: #eeeff1;
}
.nav-tab.active {
  border-left: 1px solid #ccc;
  border-bottom: 0;
  background: #fcfcfc;
}
.nav-panel {
  flex: 1;
  min-height: 0;
  border: 1px solid #ccc;
  border-right: 3px solid #ccc;
  border-bottom-width: 2px;
}
.nav-head {
  display: flex;
  align-items: center;
  gap: 9px;
  height: 29px;
  padding: 0 4px 0 20px;
  border-bottom: 1px solid #ccc;
}
.nav-head h2 {
  flex: 1;
  margin: 0;
  font-size: 13px;
}
.nav-head button {
  display: flex;
  align-items: center;
  gap: 8px;
}
.tree {
  margin: 0;
  padding: 0;
  list-style: none;
  font-size: 11px;
}
.tree li {
  display: flex;
  align-items: center;
  gap: 3px;
  height: 16px;
  padding-left: 24px;
}
.tree .root {
  padding-left: 4px;
}
.tree .parent {
  padding-left: 10px;
}
.tree .arrow {
  width: 8px;
  height: 10px;
}
.tree .parent .icon {
  margin-left: 3px;
}
.tree .hidden-item {
  color: #bbb;
}

/* graphics area */
.canvas {
  display: flex;
  flex: 1;
  flex-direction: column;
  align-items: center;
  background: linear-gradient(#c5dae9, #8fadcd 50%, #5b7baa);
}
.view-tools {
  display: flex;
  margin-top: 8px;
  padding: 0 8px 0 4px;
  background: #eeeff1;
}
.view-tools button {
  display: grid;
  place-items: center;
  width: 27px;
  height: 26px;
  border-left: 1px solid #ddd;
  background: #fff;
}
.view-tools .on {
  border: 1px solid #bbb;
  border-top: 2px solid #999;
  background: #e6e7e9;
}
.view-tools .more {
  background: linear-gradient(135deg, transparent 50%, #555 50%) right 1px bottom 3px / 4px 4px no-repeat #fff;
}
.model {
  width: 280px;
  height: 350px;
  margin-top: 120px;
}

/* status bar */
.status {
  display: flex;
  align-items: center;
  height: 44px;
  padding: 12px 18px 0 6px;
  border-top: 2px solid #999;
  background: #eff0f1;
}
.status-btn {
  display: grid;
  place-items: center;
  width: 22px;
  height: 22px;
  margin-right: 4px;
  border: 1px solid #ccc;
}
.status-btn.pressed {
  border: 1px solid #999;
  background: #e4e5e7;
}
.bar {
  width: 1px;
  height: 26px;
  margin: 0 3px;
  background: #ccc;
}
.message {
  display: flex;
  flex: 1;
  align-items: center;
  gap: 5px;
  margin: 0 0 24px 6px;
  font-size: 11px;
}
.bullet {
  width: 5px;
  height: 5px;
  border-radius: 50%;
  background: #0000c8;
}
.lights-start {
  margin-left: 33px;
}
.lights {
  display: flex;
  align-items: center;
  gap: 1px;
}
.lights i {
  width: 6px;
  height: 6px;
  border-radius: 50%;
  background: #c8c8c8;
}
.lights i:first-child {
  width: 11px;
  height: 11px;
  background: #3cd44a;
}
.find {
  display: grid;
  place-items: center;
  width: 40px;
  height: 22px;
  border: 1px solid #aaa;
  border-radius: 3px;
  background: linear-gradient(#fff, #e4e5e7);
}
.filter {
  display: flex;
  align-items: center;
  width: 166px;
  height: 18px;
  margin-left: 93px;
  padding-right: 4px;
  border: 1px solid #bbb;
  background: #f8f9f9;
}
.filter select {
  flex: 1;
  height: 16px;
  padding: 0 4px;
  border: 0;
  border-right: 1px solid #ccc;
  margin-right: 4px;
  appearance: none;
  background: none;
  font: inherit;
  color: #111;
}

.watermark {
  position: absolute;
  right: 0;
  bottom: 0;
  display: flex;
  width: 207px;
  height: 63px;
  padding-left: 2px;
  background: rgba(255, 255, 255, 0.35);
  pointer-events: none;
}
.watermark-logo {
  width: 60px;
  height: 60px;
  opacity: 0.7;
}
.watermark-text {
  display: flex;
  flex-direction: column;
  white-space: nowrap;
}
.watermark-text strong {
  padding-left: 8px;
  font-size: 29px;
  line-height: 40px;
  color: #3fa487;
  opacity: 0.75;
}
.watermark-text span {
  margin-left: -4px;
  font: 15px/18px "Open Sans", sans-serif;
  color: #a9d0d4;
}
```
